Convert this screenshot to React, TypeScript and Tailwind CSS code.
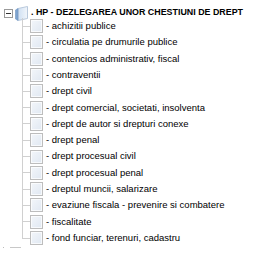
const items = [
  'achizitii publice',
  'circulatia pe drumurile publice',
  'contencios administrativ, fiscal',
  'contraventii',
  'drept civil',
  'drept comercial, societati, insolventa',
  'drept de autor si drepturi conexe',
  'drept penal',
  'drept procesual civil',
  'drept procesual penal',
  'dreptul muncii, salarizare',
  'evaziune fiscala - prevenire si combatere',
  'fiscalitate',
  'fond funciar, terenuri, cadastru',
];

function LeafIcon() {
  return (
    <svg width="13" height="14" viewBox="0 0 13 14" className="shrink-0">
      <defs>
        <linearGradient id="leaf" x1="0" y1="0" x2="1" y2="1">
          <stop offset="0" stopColor="#f4f7fb" />
          <stop offset="1" stopColor="#dfe7f1" />
        </linearGradient>
      </defs>
      <rect x="0.5" y="0.5" width="12" height="13" fill="url(#leaf)" stroke="#bdbdbd" />
      <rect x="1.5" y="1.5" width="10" height="11" fill="none" stroke="#ffffff" strokeOpacity="0.7" />
    </svg>
  );
}

function BookIcon() {
  return (
    <svg width="13" height="15" viewBox="0 0 13 15" className="shrink-0">
      <defs>
        <linearGradient id="book" x1="0" y1="0" x2="1" y2="0">
          <stop offset="0" stopColor="#cfe0f3" />
          <stop offset="1" stopColor="#f2f6fb" />
        </linearGradient>
      </defs>
      <path d="M3 2.5 L12.5 0.5 L12.5 12.5 L3 14.5 Z" fill="url(#book)" stroke="#b9c9dc" />
      <path d="M0.5 4 L3 2.5 L3 14.5 L0.5 13 Z" fill="#7ea4cf" stroke="#6f95c2" strokeWidth="0.6" />
    </svg>
  );
}

export default function App() {
  return (
    <div
      className="relative w-[253px] h-[261px] bg-white text-black overflow-hidden"
      style={{ fontFamily: '"Liberation Sans", Arial, sans-serif' }}
    >
      <div className="pt-[8px]">
        {/* root node */}
        <div className="flex items-center h-[10px] pl-[4px]">
          <div className="w-[9px] h-[9px] border border-[#9a9a9a] bg-white flex items-center justify-center shrink-0">
            <div className="w-[5px] h-px bg-[#333]" />
          </div>
          <div className="ml-[2px]">
            <BookIcon />
          </div>
          <span className="ml-[3px] text-[8.9px] font-bold whitespace-nowrap">
            . HP - DEZLEGAREA UNOR CHESTIUNI DE DREPT
          </span>
        </div>

        {/* children */}
        <div className="relative pl-[22px]">
          <div className="absolute left-[22px] top-0 h-[220px] w-px bg-[#d0d0d0]" />
          {items.map((t) => (
            <div key={t} className="flex items-center h-[16.3px]">
              <div className="w-[8px] h-px bg-[#d0d0d0] shrink-0" />
              <LeafIcon />
              <span className="ml-[3px] text-[9.5px] whitespace-nowrap">- {t}</span>
            </div>
          ))}
        </div>

        <div className="flex items-center mt-[1px] pl-[3px] gap-[6px]">
          <div className="w-px h-px bg-[#bbb]" />
          <div className="w-[11px] h-px bg-[#c8c8c8]" />
        </div>
      </div>
    </div>
  );
}
